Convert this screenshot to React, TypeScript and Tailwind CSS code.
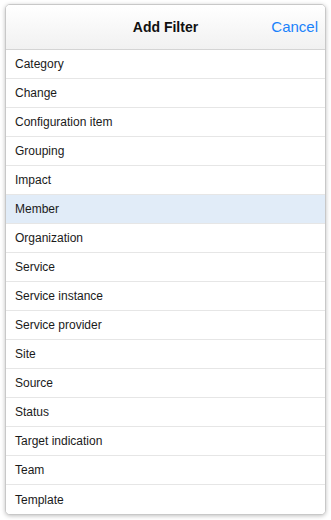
const items = [
  "Category",
  "Change",
  "Configuration item",
  "Grouping",
  "Impact",
  "Member",
  "Organization",
  "Service",
  "Service instance",
  "Service provider",
  "Site",
  "Source",
  "Status",
  "Target indication",
  "Team",
  "Template",
];

export default function App() {
  return (
    <div className="h-[520px] w-[331px] bg-white p-[5px] pt-[4px] font-['Liberation_Sans',Arial,sans-serif]">
      <div className="flex h-[511px] flex-col overflow-hidden rounded-[5px] border border-[#c8c8c8] bg-white shadow-[0_1px_4px_rgba(0,0,0,0.25)]">
        <div className="relative flex h-[45px] shrink-0 items-center justify-center border-b border-[#d4d4d4] bg-gradient-to-b from-white to-[#f1f1f1]">
          <h2 className="text-[14px] font-bold text-[#111]">Add Filter</h2>
          <button
            type="button"
            className="absolute right-[7px] top-[11px] text-[15px] text-[#1a82fb]"
          >
            Cancel
          </button>
        </div>
        <ul className="flex-1">
          {items.map((item, i) => (
            <li
              key={item}
              className={
                "flex h-[29px] items-center px-[9px] text-[12px] text-[#1a1a1a] " +
                (i < items.length - 1 ? "border-b border-[#e6e6e6] " : "") +
                (item === "Member" ? "bg-[#e1ecf8]" : "bg-white")
              }
            >
              {item}
            </li>
          ))}
        </ul>
      </div>
    </div>
  );
}
